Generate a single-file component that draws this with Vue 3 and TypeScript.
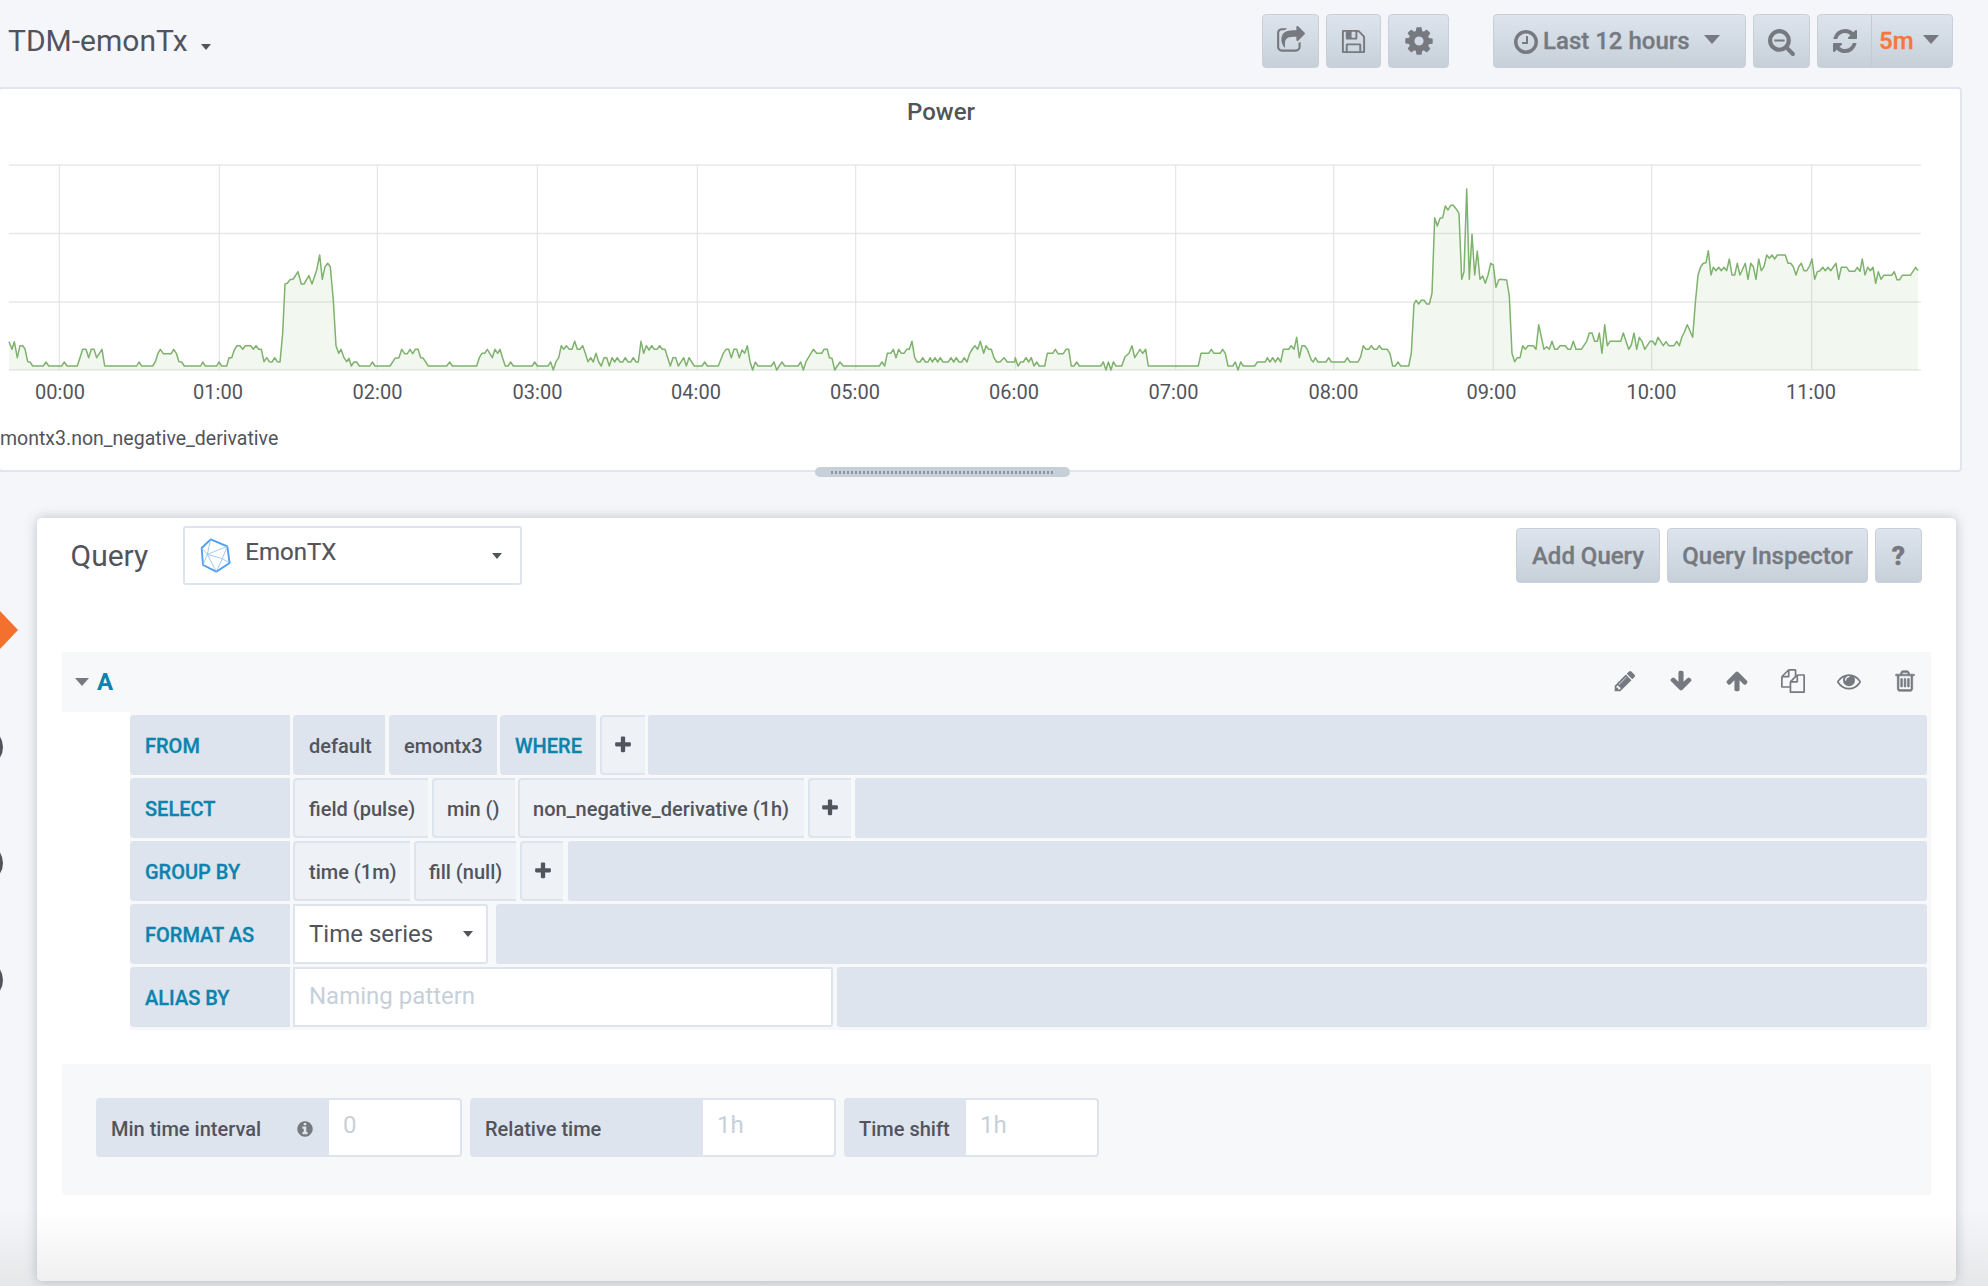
<script setup lang="ts">
type Seg = { off: number; pts: string }
const segs: Seg[] = [
  { off: 0, pts: '27,575 36,598 43,575 52,623 60,587 68,587 75,597 83,635 90,636 98,648 130,648 138,636 146,648 185,648 193,636 201,648 232,648 248,598 258,598 266,623 274,598 282,598 290,623 306,598 314,648 410,648 417,636 425,648 458,648 466,635 474,610 481,598 490,611 514,611 521,598 529,610 537,635 545,636 553,648 602,648 608,636 616,648 650,648 657,636 665,648 680,648 687,623 695,623 703,600 711,587 720,587 728,598 736,587 752,587 760,598 768,587 776,598 784,598 792,635 800,623 808,635 816,636 824,623 832,635 840,636 848,550 855,402 862,400 870,389 880,387 894,365 904,402 912,402 927,377 936,402 950,360 959,315 967,388 975,350 983,340 991,350 1000,450 1008,587 1016,610 1023,598 1032,623 1040,635 1047,625 1054,648 1062,636 1070,636 1078,648 1110,648 1117,636 1125,648 1170,648 1185,625 1197,623 1205,598 1214,611 1222,611 1230,598 1238,611 1246,598 1254,598 1262,623 1270,625 1285,648 1340,648 1349,636 1357,648 1430,648 1438,623 1446,610 1454,610 1462,598 1477,623 1485,598 1493,610' },
  { off: 500, pts: '0,598 8,625 16,648 24,648 32,636 40,648 97,648 104,636 112,648 144,648 152,636 160,660 168,635 176,623 184,587 191,598 199,587 208,598 216,598 224,574 232,598 240,598 248,587 256,610 264,635 272,623 280,636 288,610 296,636 304,648 312,623 320,623 328,648 336,623 344,636 352,623 360,636 368,636 376,623 384,636 392,636 400,623 408,636 415,636 423,574 431,610 439,587 447,600 455,587 463,598 471,598 479,587 487,598 495,598 511,648 519,623 527,623 535,648 551,623 559,648 567,623 575,636 583,648 606,648 614,636 622,648 655,648 670,610 678,598 686,598 694,623 702,598 710,598 718,623 726,600 734,610 742,587 750,635 758,660 766,636 774,648 814,648 822,636 830,660 838,648 846,636 854,648 894,648 902,636 910,660 918,635 940,598 950,610 965,610 972,598 982,598 988,623 996,625 1004,660 1020,636 1030,648 1138,648 1146,636 1154,648 1162,610 1172,610 1180,598 1188,623 1196,598 1204,610 1212,610 1220,598 1228,598 1236,574 1244,623 1252,636 1260,636 1268,623 1276,636 1284,636 1290,623 1297,636 1305,623 1313,636 1321,623 1329,636 1345,636 1353,623 1361,636 1369,623 1377,636 1385,636 1393,623 1401,636 1409,610 1417,597 1425,587 1433,598 1441,574 1451,610 1458,587 1466,598 1474,598 1482,623 1490,636' },
  { off: 1000, pts: '0,636 12,623 22,636 44,636 46,623 54,648 62,636 70,636 78,623 86,636 94,623 102,648 110,636 118,648 134,648 142,610 158,610 166,598 174,611 190,611 198,598 206,598 214,648 222,648 230,636 238,648 302,648 310,636 318,660 325,636 333,660 340,636 348,648 365,648 375,620 387,610 396,587 404,623 420,598 428,610 437,598 445,648 595,648 603,610 626,610 634,598 642,610 660,610 668,598 676,610 684,648 698,648 706,636 714,660 722,636 730,648 764,648 772,636 796,636 802,623 810,636 818,623 826,636 834,623 842,636 850,598 866,598 874,587 882,598 890,562 898,623 906,587 914,587 922,598 934,630 940,636 946,623 954,636 978,636 986,623 994,636 1034,636 1042,623 1050,636 1074,636 1082,620 1090,587 1098,598 1106,598 1114,587 1122,598 1130,598 1138,587 1146,598 1162,598 1170,611 1178,648 1186,648 1194,636 1202,648 1226,648 1234,610 1242,462 1248,451 1256,462 1264,451 1272,451 1280,462 1288,462 1296,430 1304,203 1312,228 1320,205 1328,203 1336,168 1344,180 1352,166 1360,166 1368,176 1377,190 1385,388 1392,365 1400,117 1408,388 1416,253 1424,375 1432,303 1440,388 1448,378 1456,400 1464,375 1472,340 1480,345 1488,412 1496,390' },
  { off: 1500, pts: '0,388 20,390 28,438 36,610 44,635 52,623 60,623 68,587 76,598 84,587 100,587 108,598 116,524 132,598 140,590 148,598 156,574 164,598 172,598 180,587 196,587 204,598 212,598 220,574 228,598 244,598 260,574 268,549 276,549 284,574 292,574 298,549 306,610 314,524 322,587 330,574 362,574 370,549 386,598 394,585 402,549 410,598 418,562 426,574 434,598 450,574 458,574 466,585 474,562 490,587 498,575 506,587 522,587 530,574 538,587 546,560 552,549 562,524 578,562 586,460 594,375 602,350 610,340 618,338 625,302 633,375 640,352 648,362 656,352 664,362 672,352 680,362 688,327 696,375 704,375 712,340 720,375 736,340 744,388 752,340 760,350 768,388 776,327 784,362 792,350 800,315 808,325 816,315 824,327 832,315 856,315 864,340 872,340 880,350 888,375 896,350 904,340 912,362 920,362 928,350 936,327 944,388 952,365 960,362 968,352 976,362 984,352 992,362 1008,340 1016,388 1024,352 1040,352 1048,364 1064,364 1072,352 1080,364 1087,327 1095,375 1103,352 1111,362 1119,352 1127,400 1135,365 1143,388 1151,376 1175,376 1183,365 1191,389 1199,389 1207,376 1231,376 1247,352 1254,362' },
]
const pts: [number, number][] = segs.flatMap((s) =>
  s.pts.split(' ').map((p): [number, number] => {
    const [x, y] = p.split(',').map(Number)
    return [+(s.off + x / 3).toFixed(1), +(y / 3).toFixed(1)]
  }),
)
const linePts = pts.map((p) => p.join(',')).join(' ')
const areaPts = `${pts[0][0]},220 ${linePts} ${pts[pts.length - 1][0]},220`

const gridY = [15, 83.5, 152, 220]
const gridX = [59.3, 219.3, 377.3, 537.3, 697.3, 855.7, 1015.3, 1175.7, 1333.7, 1493.3, 1651.7, 1811.7]
const ticks = [
  { t: '00:00', x: 60 }, { t: '01:00', x: 218 }, { t: '02:00', x: 377.5 }, { t: '03:00', x: 537.5 },
  { t: '04:00', x: 696 }, { t: '05:00', x: 855 }, { t: '06:00', x: 1014 }, { t: '07:00', x: 1173.5 },
  { t: '08:00', x: 1333.5 }, { t: '09:00', x: 1491.5 }, { t: '10:00', x: 1651.5 }, { t: '11:00', x: 1811 },
]
const icons: Record<string, string> = {
  share: 'M1472 989v259q0 119-84.500 203.500t-203.500 84.500h-832q-119 0-203.500-84.500t-84.500-203.500v-832q0-119 84.500-203.500t203.500-84.500h255q13 0 22.500 9.500t9.500 22.500q0 27-26 32-77 26-133 60-10 4-16 4h-112q-66 0-113 47t-47 113v832q0 66 47 113t113 47h832q66 0 113-47t47-113v-214q0-19 18-29 28-13 54-37 16-16 35-8 21 9 21 29zm237-496l-384 384q-18 19-45 19-12 0-25-5-39-17-39-59v-192h-160q-323 0-438 131-119 137-74 473 3 23-20 34-8 2-12 2-16 0-26-13-10-14-21-31t-39.500-68.500-49.500-99.500-38.500-114-17.500-122q0-49 3.500-91t14-90 28-88 47-81.500 68.500-74 94.500-61.500 124.500-48.500 159.500-30.500 196.500-11h160v-192q0-42 39-59 13-5 25-5 26 0 45 19l384 384q19 19 19 45t-19 45z',
  save: 'M512 1536h768v-384h-768v384zm896 0h128v-896q0-14-10-38.500t-20-34.500l-281-281q-10-10-34-20t-39-10v416q0 40-28 68t-68 28h-576q-40 0-68-28t-28-68v-416h-128v1280h128v-416q0-40 28-68t68-28h832q40 0 68 28t28 68v416zm-384-928v-320q0-13-9.500-22.500t-22.500-9.500h-192q-13 0-22.500 9.500t-9.500 22.500v320q0 13 9.500 22.500t22.500 9.500h192q13 0 22.500-9.500t9.500-22.500zm640 32v928q0 40-28 68t-68 28h-1344q-40 0-68-28t-28-68v-1344q0-40 28-68t68-28h928q40 0 88 20t76 48l280 280q28 28 48 76t20 88z',
  cog: 'M1152 896q0-106-75-181t-181-75-181 75-75 181 75 181 181 75 181-75 75-181zm512-109v222q0 12-8 23t-20 13l-185 28q-19 54-39 91 35 50 107 138 10 12 10 25t-9 23q-27 37-99 108t-94 71q-12 0-26-9l-138-108q-44 23-91 38-16 136-29 186-7 28-36 28h-222q-14 0-24.500-8.500t-11.500-21.500l-28-184q-49-16-90-37l-141 107q-10 9-25 9-14 0-25-11-126-114-165-168-7-10-7-23 0-12 8-23 15-21 51-66.500t54-70.500q-27-50-41-99l-183-27q-13-2-21-12.500t-8-23.500v-222q0-12 8-23t19-13l186-28q14-46 39-92-40-57-107-138-10-12-10-24 0-10 9-23 26-36 98.500-107.500t94.500-71.500q13 0 26 10l138 107q44-23 91-38 16-136 29-186 7-28 36-28h222q14 0 24.500 8.500t11.500 21.500l28 184q49 16 90 37l142-107q9-9 24-9 13 0 25 10 129 119 165 170 7 8 7 22 0 12-8 23-15 21-51 66.500t-54 70.500q26 50 41 98l183 28q13 2 21 12.500t8 23.500z',
  clock: 'M1024 544v448q0 14-9 23t-23 9h-320q-14 0-23-9t-9-23v-64q0-14 9-23t23-9h224v-352q0-14 9-23t23-9h64q14 0 23 9t9 23zm416 352q0-148-73-273t-198-198-273-73-273 73-198 198-73 273 73 273 198 198 273 73 273-73 198-198 73-273zm224 0q0 209-103 385.500t-279.500 279.500-385.500 103-385.500-103-279.500-279.500-103-385.500 103-385.500 279.500-279.500 385.500-103 385.500 103 279.500 279.500 103 385.500z',
  zoom: 'M1088 800v64q0 13-9.500 22.500t-22.500 9.500h-576q-13 0-22.500-9.500t-9.500-22.500v-64q0-13 9.500-22.500t22.500-9.500h576q13 0 22.500 9.500t9.500 22.500zm128 32q0-185-131.500-316.500t-316.500-131.500-316.500 131.500-131.500 316.500 131.500 316.500 316.500 131.500 316.500-131.500 131.500-316.500zm512 832q0 53-37.500 90.500t-90.500 37.500q-54 0-90-38l-343-342q-179 124-399 124-143 0-273.500-55.500t-225-150-150-225-55.500-273.500 55.500-273.500 150-225 225-150 273.500-55.500 273.500 55.500 225 150 150 225 55.500 273.500q0 220-124 399l343 343q37 37 37 90z',
  refresh: 'M1639 1056q0 5-1 7-64 268-268 434.500t-478 166.500q-146 0-282.500-55t-243.500-157l-129 129q-19 19-45 19t-45-19-19-45v-448q0-26 19-45t45-19h448q26 0 45 19t19 45-19 45l-137 137q71 66 161 102t187 36q134 0 250-65t186-179q11-17 53-117 8-23 30-23h192q13 0 22.500 9.500t9.500 22.500zm25-800v448q0 26-19 45t-45 19h-448q-26 0-45-19t-19-45 19-45l138-138q-148-137-349-137-134 0-250 65t-186 179q-11 17-53 117-8 23-30 23h-199q-13 0-22.500-9.500t-9.500-22.500v-7q65-268 270-434.500t480-166.500q146 0 284 55.500t245 156.500l130-129q19-19 45-19t45 19 19 45z',
  pencil: 'M491 1536l91-91-235-235-91 91v107h128v128h107zm523-928q0-22-22-22-10 0-17 7l-542 542q-7 7-7 17 0 22 22 22 10 0 17-7l542-542q7-7 7-17zm-54-192l416 416-832 832h-416v-416zm683 96q0 53-37 90l-166 166-416-416 166-165q36-38 90-38 53 0 91 38l235 234q37 39 37 91z',
  down: 'M1675 832q0 53-37 90l-651 652q-39 37-91 37-53 0-90-37l-651-652q-38-36-38-90 0-53 38-91l74-75q39-37 91-37 53 0 90 37l294 294v-704q0-52 38-90t90-38h128q52 0 90 38t38 90v704l294-294q37-37 90-37 52 0 91 37l75 75q37 39 37 91z',
  up: 'M1675 971q0 51-37 90l-75 75q-38 38-91 38-54 0-90-38l-294-293v704q0 52-37.500 84.500t-90.500 32.500h-128q-53 0-90.500-32.500t-37.500-84.500v-704l-294 293q-36 38-90 38t-90-38l-75-75q-38-38-38-90 0-53 38-91l651-651q35-37 90-37 54 0 91 37l651 651q37 39 37 91z',
  copy: 'M1696 384q40 0 68 28t28 68v1216q0 40-28 68t-68 28h-960q-40 0-68-28t-28-68v-288h-544q-40 0-68-28t-28-68v-672q0-40 20-88t48-76l408-408q28-28 76-48t88-20h416q40 0 68 28t28 68v328q68-40 128-40h416zm-544 213l-299 299h299v-299zm-640-384l-299 299h299v-299zm196 647l316-316v-416h-384v416q0 40-28 68t-68 28h-416v640h512v-256q0-40 20-88t48-76zm956 804v-1152h-384v416q0 40-28 68t-68 28h-416v640h896z',
  eye: 'M1664 960q-152-236-381-353 61 104 61 225 0 185-131.500 316.500t-316.500 131.500-316.500-131.500-131.500-316.500q0-121 61-225-229 117-381 353 133 205 333.500 326.500t434.500 121.500 434.500-121.500 333.500-326.500zm-720-384q0-20-14-34t-34-14q-125 0-214.500 89.500t-89.500 214.500q0 20 14 34t34 14 34-14 14-34q0-86 61-147t147-61q20 0 34-14t14-34zm848 384q0 34-20 69-140 230-376.500 368.500t-499.500 138.500-499.500-139-376.500-368q-20-35-20-69t20-69q140-229 376.500-368t499.500-139 499.500 139 376.500 368q20 35 20 69z',
  trash: 'M704 736v576q0 14-9 23t-23 9h-64q-14 0-23-9t-9-23v-576q0-14 9-23t23-9h64q14 0 23 9t9 23zm256 0v576q0 14-9 23t-23 9h-64q-14 0-23-9t-9-23v-576q0-14 9-23t23-9h64q14 0 23 9t9 23zm256 0v576q0 14-9 23t-23 9h-64q-14 0-23-9t-9-23v-576q0-14 9-23t23-9h64q14 0 23 9t9 23zm128 724v-948h-896v948q0 22 7 40.500t14.500 27 10.500 8.500h832q3 0 10.500-8.500t14.500-27 7-40.500zm-672-1076h448l-48-117q-7-9-17-11h-317q-10 2-17 11zm928 32v64q0 14-9 23t-23 9h-96v948q0 83-47 143.500t-113 60.500h-832q-66 0-113-58.500t-47-141.500v-952h-96q-14 0-23-9t-9-23v-64q0-14 9-23t23-9h309l70-167q15-37 54-63t79-26h320q40 0 79 26t54 63l70 167h309q14 0 23 9t9 23z',
  info: 'M1152 1376v-160q0-14-9-23t-23-9h-96v-512q0-14-9-23t-23-9h-320q-14 0-23 9t-9 23v160q0 14 9 23t23 9h96v320h-96q-14 0-23 9t-9 23v160q0 14 9 23t23 9h448q14 0 23-9t9-23zm-128-896v-160q0-14-9-23t-23-9h-192q-14 0-23 9t-9 23v160q0 14 9 23t23 9h192q14 0 23-9t9-23zm640 416q0 209-103 385.500t-279.500 279.500-385.500 103-385.500-103-279.500-279.500-103-385.500 103-385.500 279.500-279.500 385.500-103 385.500 103 279.500 279.500 103 385.500z',
  plus: 'M1600 736v192q0 40-28 68t-68 28h-416v416q0 40-28 68t-68 28h-192q-40 0-68-28t-28-68v-416h-416q-40 0-68-28t-28-68v-192q0-40 28-68t68-28h416v-416q0-40 28-68t68-28h192q40 0 68 28t28 68v416h416q40 0 68 28t28 68z',
}
const rowIcons = ['pencil', 'down', 'up', 'copy', 'eye', 'trash']
</script>

<template>
  <div class="page">
    <i class="edge diamond"></i>
    <i class="edge dot d1"></i>
    <i class="edge dot d2"></i>
    <i class="edge dot d3"></i>

    <header class="topbar">
      <div class="dash-title">TDM-emonTx <i class="caret title-caret"></i></div>
      <div class="actions">
        <button class="btn ic-share"><svg viewBox="0 0 1792 1792"><path :d="icons.share" /></svg></button>
        <button class="btn ic-save"><svg viewBox="0 0 1792 1792"><path :d="icons.save" /></svg></button>
        <button class="btn ic-cog"><svg viewBox="0 0 1792 1792"><path :d="icons.cog" /></svg></button>
        <button class="btn time-btn">
          <svg viewBox="0 0 1792 1792"><path :d="icons.clock" /></svg>
          <span>Last 12 hours</span>
          <i class="caret big"></i>
        </button>
        <button class="btn ic-zoom"><svg viewBox="0 0 1792 1792"><path :d="icons.zoom" /></svg></button>
        <div class="btn refresh-group">
          <span class="refresh"><svg viewBox="0 0 1792 1792"><path :d="icons.refresh" /></svg></span>
          <span class="interval"><b>5m</b><i class="caret big"></i></span>
        </div>
      </div>
    </header>

    <section class="panel">
      <h2 class="panel-title">Power</h2>
      <svg class="chart" viewBox="0 0 1960 260" width="1960" height="260">
        <line v-for="y in gridY" :key="y" x1="9" x2="1921" :y1="y" :y2="y" class="gy" />
        <line v-for="x in gridX" :key="x" :x1="x" :x2="x" y1="15" y2="220" class="gx" />
        <polygon :points="areaPts" class="area" />
        <polyline :points="linePts" class="line" />
        <text v-for="t in ticks" :key="t.t" :x="t.x" y="249" text-anchor="middle" class="tick">{{ t.t }}</text>
      </svg>
      <div class="legend">montx3.non_negative_derivative</div>
      <div class="handle"><span></span></div>
    </section>

    <section class="card">
      <div class="card-head">
        <h3 class="query-title">Query</h3>
        <div class="ds-select">
          <svg class="ds-icon" viewBox="25 20 100 110">
            <path d="M60 27 110 48 117 98 77 124 37 104 33 53Z" class="ds-out" />
            <path d="M60 27 50 72 33 53M50 72 110 48M50 72 37 104M50 72 95 85 110 48M95 85 117 98M95 85 77 124M50 72 77 124" class="ds-in" />
          </svg>
          <span class="ds-name">EmonTX</span>
          <i class="caret small"></i>
        </div>
        <div class="head-btns">
          <button class="btn txt add">Add Query</button>
          <button class="btn txt insp">Query Inspector</button>
          <button class="btn txt help">?</button>
        </div>
      </div>

      <div class="query-head">
        <i class="caret toggle"></i>
        <span class="ref">A</span>
        <div class="row-icons">
          <svg v-for="n in rowIcons" :key="n" :class="['ri', 'ri-' + n]" viewBox="0 0 1792 1792"><path :d="icons[n]" /></svg>
        </div>
      </div>

      <div class="rows">
        <div class="row">
          <div class="lbl">FROM</div>
          <div class="seg solid s-default">default</div>
          <div class="seg solid s-em">emontx3</div>
          <div class="seg solid kw s-where">WHERE</div>
          <div class="seg plus from-plus"><svg viewBox="0 0 1792 1792"><path :d="icons.plus" /></svg></div>
          <div class="fill"></div>
        </div>
        <div class="row">
          <div class="lbl">SELECT</div>
          <div class="seg s-field">field (pulse)</div>
          <div class="seg s-min">min ()</div>
          <div class="seg s-non">non_negative_derivative (1h)</div>
          <div class="seg plus sel-plus"><svg viewBox="0 0 1792 1792"><path :d="icons.plus" /></svg></div>
          <div class="fill"></div>
        </div>
        <div class="row">
          <div class="lbl">GROUP BY</div>
          <div class="seg s-time">time (1m)</div>
          <div class="seg s-fill">fill (null)</div>
          <div class="seg plus grp-plus"><svg viewBox="0 0 1792 1792"><path :d="icons.plus" /></svg></div>
          <div class="fill"></div>
        </div>
        <div class="row">
          <div class="lbl">FORMAT AS</div>
          <div class="field format">Time series<i class="caret small"></i></div>
          <div class="fill"></div>
        </div>
        <div class="row">
          <div class="lbl">ALIAS BY</div>
          <div class="field alias">Naming pattern</div>
          <div class="fill"></div>
        </div>
      </div>

      <div class="options">
        <div class="opt o-min">
          <div class="opt-lbl">Min time interval<svg class="info" viewBox="0 0 1792 1792"><path :d="icons.info" /></svg></div>
          <div class="opt-in">0</div>
        </div>
        <div class="opt o-rel">
          <div class="opt-lbl">Relative time</div>
          <div class="opt-in">1h</div>
        </div>
        <div class="opt o-shift">
          <div class="opt-lbl">Time shift</div>
          <div class="opt-in">1h</div>
        </div>
      </div>
    </section>
  </div>
</template>

<style>
html, body { margin: 0; background: #f5f6f9; }
</style>

<style scoped>
.page {
  position: relative;
  width: 1988px;
  height: 1286px;
  overflow: hidden;
  background: linear-gradient(#f5f6f9 94%, #e6e7e9 100%);
  font-family: Roboto, "Liberation Sans", sans-serif;
  color: #52545c;
  display: flex;
  flex-direction: column;
}
.edge { position: absolute; display: block; }
.diamond {
  left: 0; top: 611px; width: 18px; height: 38px;
  background: #f4702f;
  clip-path: polygon(0 0, 100% 50%, 0 100%);
}
.dot { left: -37px; width: 40px; height: 40px; border: 3px solid #52545c; border-radius: 50%; box-sizing: border-box; }
.d1 { top: 727px; } .d2 { top: 843px; } .d3 { top: 960px; }

.caret { display: inline-block; width: 0; height: 0; border-style: solid; border-color: #52545c transparent transparent; }

.topbar { height: 87px; flex: none; display: flex; justify-content: space-between; padding: 14px 35px 5px 8px; box-sizing: border-box; }
.dash-title { font-size: 30px; line-height: 54px; color: #52545c; white-space: nowrap; }
.title-caret { border-width: 6px 5.5px 0; margin: 0 0 1px 6px; vertical-align: 0; }
.actions { display: flex; gap: 7px; }

.btn {
  box-sizing: border-box;
  height: 54px;
  border: 1.5px solid #c7d0d9;
  border-radius: 4px;
  background: linear-gradient(#dde4ed, #c7d0d9);
  color: #767980;
  font-family: inherit;
  padding: 0;
  display: flex;
  align-items: center;
  justify-content: center;
  -webkit-text-stroke: 0.3px #767980;
}
.btn svg { fill: #767980; display: block; }
.ic-share { width: 57px; } .ic-share svg { width: 30px; height: 30px; }
.ic-save { width: 55px; } .ic-save svg { width: 27px; height: 27px; }
.ic-cog { width: 61px; margin-right: 37px; } .ic-cog svg { width: 32px; height: 32px; }
.time-btn { width: 253px; font-size: 24px; font-weight: 500; justify-content: flex-start; padding-left: 18px; }
.time-btn svg { width: 28px; height: 28px; margin-right: 3px; margin-top: 2px; }
.caret.big { border-width: 9.5px 8.5px 0; border-top-color: #767980; }
.time-btn .caret { margin-left: 14px; margin-top: -4px; }
.ic-zoom { width: 57px; } .ic-zoom svg { width: 29px; height: 29px; }
.refresh-group { width: 136px; justify-content: flex-start; }
.refresh { width: 53px; height: 100%; display: flex; align-items: center; justify-content: center; border-right: 1px solid #c3ccd6; }
.refresh svg { width: 28px; height: 28px; }
.interval { padding-left: 7px; display: flex; align-items: center; font-size: 24px; }
.interval b { color: #f7763b; font-weight: 500; margin-right: 9px; -webkit-text-stroke: 0.3px #f7763b; }
.interval .caret { margin-top: -3px; }

.panel {
  position: relative;
  flex: none;
  box-sizing: border-box;
  width: 1964px;
  height: 385px;
  margin-left: -2px;
  background: #fff;
  border: 2px solid #e1e5f0;
  border-radius: 4px;
  padding-left: 2px;
}
.panel-title { margin: 0; text-align: center; font-size: 24px; font-weight: 500; line-height: 28px; padding-top: 9px; color: #52545c; width: 1878px; height: 61px; box-sizing: border-box; }
.chart { display: block; position: relative; margin-left: -2px; }
.gy { stroke: #e8e8e8; stroke-width: 1.4; }
.gx { stroke: #e2e2e2; stroke-width: 1.1; }
.area { fill: #7eb26d; fill-opacity: 0.1; stroke: none; }
.line { fill: none; stroke: #7eb26d; stroke-width: 1.5; stroke-linejoin: round; }
.tick { font-size: 20px; fill: #52545c; font-family: Roboto, sans-serif; }
.legend { font-size: 19.5px; line-height: 24px; margin: 17px 0 0 -2px; white-space: nowrap; color: #52545c; }
.handle {
  position: absolute; left: 815px; bottom: -7px; width: 255px; height: 10px;
  background: #c7d0d9; border-radius: 5px; display: flex; align-items: center; justify-content: center;
}
.handle span { width: 224px; height: 3px; background: repeating-linear-gradient(90deg, #8e97a3 0 2px, transparent 2px 4px); }

.card {
  flex: none;
  box-sizing: border-box;
  width: 1919px;
  height: 763px;
  margin: 46px 0 0 37px;
  background: linear-gradient(#fff 91%, #f0f0f0 100%);
  border-radius: 5px;
  box-shadow: 0 0 12px rgba(80, 90, 110, 0.34);
  padding: 8px 25px 0;
  position: relative;
}
.card-head { height: 126px; display: flex; align-items: flex-start; box-sizing: border-box; }
.query-title { margin: 0 0 0 8.5px; width: 112.5px; font-weight: 400; font-size: 30px; line-height: 60px; color: #52545c; flex: none; }
.ds-select {
  box-sizing: border-box; width: 339px; height: 59px; flex: none;
  background: #fff; border: 2px solid #dde4ed; border-radius: 3px;
  display: flex; align-items: center; padding: 0 18px 0 14px;
}
.ds-icon { width: 33.3px; height: 36.7px; flex: none; }
.ds-out { fill: none; stroke: #4f9cf0; stroke-width: 5.5; stroke-linejoin: round; }
.ds-in { fill: none; stroke: #8dbcf3; stroke-width: 2.4; }
.ds-name { font-size: 24px; margin: -8px 0 0 13px; flex: 1; color: #52545c; -webkit-text-stroke: 0.2px #52545c; }
.caret.small { border-width: 6.5px 5.5px 0; }
.head-btns { margin-left: auto; margin-top: 2px; display: flex; gap: 7px; padding-right: 9px; }
.btn.txt { font-size: 24px; font-weight: 500; height: 55px; }
.add { width: 144px; } .insp { width: 201px; } .btn.help { width: 47px; font-size: 26px; font-weight: 900; }

.query-head { height: 60px; background: #f7f8fa; display: flex; align-items: center; padding: 0 14px 0 13px; }
.toggle { border-width: 8px 7.5px 0; border-top-color: #767980; }
.ref { font-size: 24px; font-weight: 700; color: #0a83ad; margin-left: 8px; }
.row-icons { margin-left: auto; margin-top: -2px; display: flex; align-items: center; gap: 32px; }
.ri { width: 24px; height: 24px; fill: #767980; display: block; }
.ri-trash { stroke: #767980; stroke-width: 45; }

.rows { margin-left: 68px; background: #f7f8fa; padding: 3px 4px 4px 0; display: flex; flex-direction: column; gap: 3px; height: 318px; box-sizing: border-box; }
.row { display: flex; height: 60px; gap: 3px; }
.lbl {
  width: 160px; flex: none; box-sizing: border-box; background: #dde4ed; border-radius: 4px 0 0 4px;
  padding-left: 15px; color: #0a83ad; font-size: 20px; font-weight: 500; line-height: 62px; -webkit-text-stroke: 0.3px #0a83ad;
}
.seg {
  box-sizing: border-box; flex: none; height: 60px; line-height: 59px;
  background: #eef1f6; border: 2px solid #dde4ed; border-right: none; border-radius: 4px 0 0 4px;
  font-size: 20px; font-weight: 500; padding-left: 14px; white-space: nowrap; color: #52545c;
}
.solid { background: #dde4ed; border-color: #dde4ed; }
.kw { color: #0a83ad; -webkit-text-stroke: 0.3px #0a83ad; }
.s-default { width: 92px; margin-right: 1px; }
.s-em { width: 108px; padding-left: 13px; }
.s-where { width: 96px; margin-right: 1px; padding-left: 13px; }
.plus { display: flex; align-items: center; justify-content: center; padding: 0; color: #52545c; }
.plus svg { width: 20px; height: 20px; fill: #52545c; }
.from-plus { width: 45px; padding-right: 2px; }
.s-field { width: 135px; margin-right: 1px; } .s-min { width: 83px; padding-left: 13px; } .s-non { width: 286px; margin-right: 1px; padding-left: 13px; } .sel-plus { width: 43px; margin-right: 1px; padding-right: 2px; }
.s-time { width: 117px; margin-right: 1px; } .s-fill { width: 102px; margin-right: 1px; padding-left: 13px; } .grp-plus { width: 43px; margin-right: 2px; }
.fill { flex: 1; background: #dde4ed; border-radius: 3px; }
.field {
  box-sizing: border-box; height: 60px; flex: none; background: #fff; border: 2px solid #dde4ed; border-radius: 0 3px 3px 0;
  font-size: 24px; line-height: 54px; padding-left: 14px;
}
.format { width: 195px; display: flex; justify-content: space-between; padding-right: 13px; color: #52545c; margin-right: 5px; line-height: 56px; }
.format .caret { align-self: center; margin-top: 0; }
.alias { width: 540px; color: #c7d0d9; margin-right: 1px; }

.options { margin-top: 34px; height: 131px; background: #f7f8fa; border-radius: 3px; padding: 34px 34px 0; box-sizing: border-box; display: flex; gap: 8px; }
.opt { display: flex; height: 59px; }
.opt-lbl {
  box-sizing: border-box; background: #dde4ed; border-radius: 4px 0 0 4px; height: 59px; padding-left: 15px;
  font-size: 20px; font-weight: 500; line-height: 60px; display: flex; color: #52545c; align-items: center; padding-top: 2px;
}
.opt-in {
  box-sizing: border-box; background: #fff; border: 2px solid #dde4ed; border-left: none; border-radius: 0 4px 4px 0; height: 59px;
  font-size: 24px; line-height: 50px; padding-left: 14px; color: #c7d0d9; width: 133px;
}
.o-min .opt-lbl { width: 233px; } .o-rel .opt-lbl { width: 233px; } .o-shift .opt-lbl { width: 122px; }
.info { width: 18px; height: 18px; fill: #767980; margin-left: auto; margin-right: 15px; }
</style>
